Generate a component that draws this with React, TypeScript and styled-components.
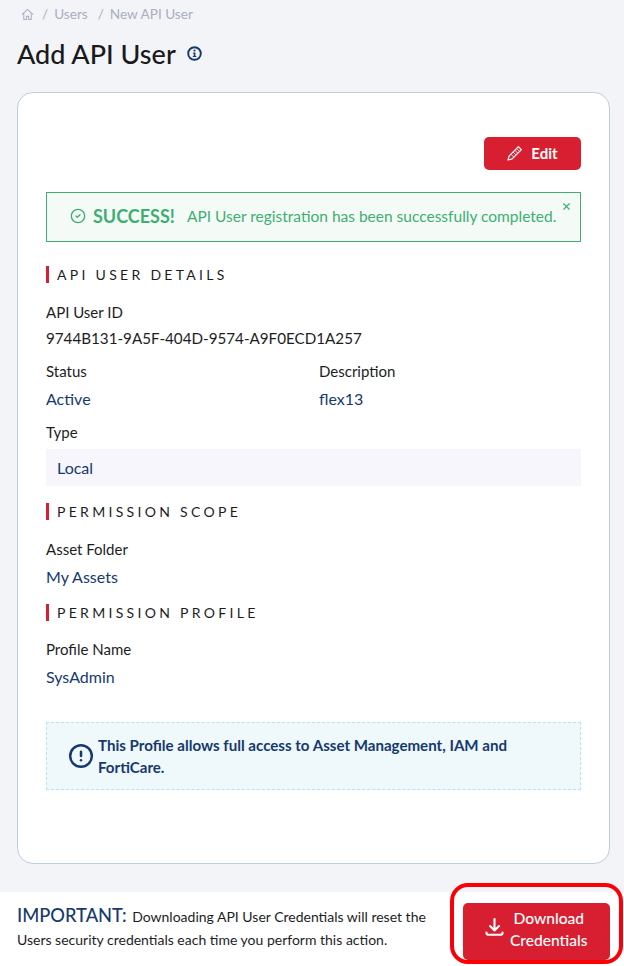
import React from "react";
import styled, { createGlobalStyle } from "styled-components";
import { CircleCheck, X, CircleAlert } from "lucide-react";

const GlobalStyle = createGlobalStyle`
  html, body {
    margin: 0;
    padding: 0;
    background: #f2f4f7;
  }
  body {
    font-family: Lato, "Liberation Sans", sans-serif;
    color: #1d1d1f;
  }
`;

const Page = styled.div`
  width: 624px;
  height: 966px;
  display: flex;
  flex-direction: column;
  overflow: hidden;
`;

const Top = styled.div`
  flex: 1;
  padding: 5px 14px 0 17px;
`;

const Breadcrumb = styled.div`
  display: flex;
  align-items: center;
  height: 18px;
  padding-left: 4px;
  font-size: 13.6px;
  color: #a9afc0;
`;

const Crumb = styled.span<{ $gap: number }>`
  margin-left: ${(p) => p.$gap}px;
`;

const TitleRow = styled.div`
  display: flex;
  align-items: center;
  margin-top: 13px;
  height: 34px;
  color: #16396f;
`;

const Title = styled.h1`
  margin: 0 11px 0 0;
  font-size: 27px;
  font-weight: 500;
  color: #1a1a1c;
`;

const Card = styled.div`
  margin-top: 22px;
  height: 772px;
  box-sizing: border-box;
  background: #fff;
  border: 1px solid #bccde4;
  border-radius: 16px;
  padding: 44px 28px 0;
`;

const EditRow = styled.div`
  display: flex;
  justify-content: flex-end;
`;

const RedButton = styled.button`
  display: flex;
  align-items: center;
  justify-content: center;
  border: none;
  padding: 0;
  border-radius: 5px;
  background: #d81f32;
  color: #fff;
  font-family: inherit;
  font-weight: 500;
`;

const EditButton = styled(RedButton)`
  width: 97px;
  height: 33px;
  padding-bottom: 1px;
  gap: 8px;
  font-size: 15px;
  font-weight: 700;
`;

const Alert = styled.div`
  position: relative;
  margin-top: 22px;
  height: 50px;
  box-sizing: border-box;
  display: flex;
  align-items: center;
  padding: 0 0 2px 23px;
  background: #f4fbf6;
  border: 1px solid #3fae72;
  color: #3fae72;
  font-size: 15.5px;
`;

const AlertStrong = styled.strong`
  font-size: 18px;
  font-weight: 700;
  margin: 0 12px 0 7px;
`;

const Close = styled.div`
  position: absolute;
  top: 8px;
  right: 8px;
  display: flex;
`;

const Section = styled.h2<{ $top?: number }>`
  margin: ${(p) => p.$top ?? 17}px 0 0;
  height: 17px;
  line-height: 17px;
  padding-left: 8px;
  border-left: 3px solid #d81f32;
  font-size: 14px;
  font-weight: 400;
  letter-spacing: 3.3px;
  color: #1d1d1f;
`;

const Label = styled.div`
  font-size: 15px;
  line-height: 20px;
  color: #1d1d1f;
`;

const Value = styled.div<{ $dark?: boolean }>`
  margin-top: ${(p) => (p.$dark ? 6 : 8)}px;
  font-size: ${(p) => (p.$dark ? "15.2px" : "16px")};
  line-height: 20px;
  color: ${(p) => (p.$dark ? "#1d1d1f" : "#16396f")};
`;

const Field = styled.div<{ $top: number }>`
  margin-top: ${(p) => p.$top}px;
`;

const TwoCols = styled.div`
  display: grid;
  grid-template-columns: 273px 1fr;
  margin-top: 13px;
`;

const LocalBox = styled.div`
  margin-top: 7px;
  height: 37px;
  display: flex;
  align-items: center;
  padding-left: 11px;
  background: #f6f6fc;
  font-size: 16px;
  color: #16396f;
`;

const Note = styled.div`
  margin-top: 35px;
  height: 68px;
  box-sizing: border-box;
  display: flex;
  align-items: center;
  gap: 4px;
  padding: 0 60px 0 21px;
  background: #eff8fa;
  border: 1px dashed #b5e3f0;
  color: #16396f;
  font-size: 15.1px;
  font-weight: 700;
  line-height: 22px;
`;

const Footer = styled.div`
  height: 74px;
  box-sizing: border-box;
  display: flex;
  align-items: flex-start;
  justify-content: space-between;
  padding: 11px 14px 0 17px;
  background: #fff;
`;

const FooterText = styled.div`
  width: 420px;
  padding-top: 1px;
  font-size: 14px;
  line-height: 23px;
  color: #1d1d1f;
`;

const Important = styled.span`
  margin-right: 2px;
  font-size: 18.3px;
  font-weight: 500;
  color: #16396f;
`;

const DownloadWrap = styled.div`
  position: relative;
`;

const DownloadButton = styled(RedButton)`
  width: 147px;
  height: 57px;
  gap: 4.5px;
  padding-bottom: 5px;
  font-size: 15.6px;
  line-height: 22px;
`;

const DownloadSvg = styled.svg`
  margin-bottom: 4px;
`;

const Highlight = styled.div`
  position: absolute;
  top: -20px;
  left: -13px;
  right: -13px;
  bottom: -4px;
  border: 4px solid #fb0007;
  border-radius: 18px;
  pointer-events: none;
`;

const HomeIcon = () => (
  <svg width="13" height="13" viewBox="0 0 14 14" fill="none" stroke="currentColor" strokeWidth="1.1" strokeLinejoin="round">
    <path d="M1 7.2 7 1.6l6 5.6" />
    <path d="M3 5.6v6.9h2.8V9h2.4v3.5H11V5.6" />
  </svg>
);

const InfoIcon = () => (
  <svg width="15" height="15" viewBox="0 0 15 15">
    <circle cx="7.5" cy="7.5" r="6.3" fill="none" stroke="currentColor" strokeWidth="1.9" />
    <circle cx="7.5" cy="4.5" r="1.1" fill="currentColor" />
    <path d="M5.9 6.4h2.5v3.6h.9v1.1H5.8V10h.9V7.5h-.8z" fill="currentColor" />
  </svg>
);

const PencilIcon = () => (
  <svg width="16" height="16" viewBox="0 0 16 16" fill="none" stroke="currentColor" strokeWidth="1.2" strokeLinejoin="round">
    <path d="M11.4 1.6l3 3L5.2 13.8 1 15l1.2-4.2z" />
    <path d="M9.6 3.4l3 3M3.9 9.2l2.9 2.9M6 7l2.9 2.9M7.8 5.2l2.9 2.9" strokeWidth="0.9" />
  </svg>
);

const DownloadIcon = () => (
  <DownloadSvg width="20" height="20" viewBox="0 0 20 20" fill="none" stroke="currentColor" strokeWidth="2.1" strokeLinecap="round" strokeLinejoin="round">
    <path d="M9.5 2v11.5M5 9l4.5 4.5L14 9" />
    <path d="M1.5 15.5v.6c0 1 .7 1.6 1.6 1.6h12.8c.9 0 1.6-.6 1.6-1.6v-.6" />
  </DownloadSvg>
);

export default function App() {
  return (
    <Page>
      <GlobalStyle />
      <Top>
        <Breadcrumb>
          <HomeIcon />
          <Crumb $gap={8}>/</Crumb>
          <Crumb $gap={6}>Users</Crumb>
          <Crumb $gap={10}>/</Crumb>
          <Crumb $gap={6}>New API User</Crumb>
        </Breadcrumb>
        <TitleRow>
          <Title>Add API User</Title>
          <InfoIcon />
        </TitleRow>
        <Card>
          <EditRow>
            <EditButton>
              <PencilIcon />
              Edit
            </EditButton>
          </EditRow>
          <Alert>
            <CircleCheck size={16} strokeWidth={2} />
            <AlertStrong>SUCCESS!</AlertStrong>
            API User registration has been successfully completed.
            <Close>
              <X size={11} strokeWidth={2.5} />
            </Close>
          </Alert>
          <Section $top={24}>API USER DETAILS</Section>
          <Field $top={19}>
            <Label>API User ID</Label>
            <Value $dark>9744B131-9A5F-404D-9574-A9F0ECD1A257</Value>
          </Field>
          <TwoCols>
            <div>
              <Label>Status</Label>
              <Value>Active</Value>
            </div>
            <div>
              <Label>Description</Label>
              <Value>flex13</Value>
            </div>
          </TwoCols>
          <Field $top={13}>
            <Label>Type</Label>
            <LocalBox>Local</LocalBox>
          </Field>
          <Section>PERMISSION SCOPE</Section>
          <Field $top={19}>
            <Label>Asset Folder</Label>
            <Value>My Assets</Value>
          </Field>
          <Section>PERMISSION PROFILE</Section>
          <Field $top={18}>
            <Label>Profile Name</Label>
            <Value>SysAdmin</Value>
          </Field>
          <Note>
            <CircleAlert size={26} strokeWidth={2.3} style={{ flexShrink: 0 }} />
            <div>This Profile allows full access to Asset Management, IAM and FortiCare.</div>
          </Note>
        </Card>
      </Top>
      <Footer>
        <FooterText>
          <Important>IMPORTANT:</Important> Downloading API User Credentials will reset the Users security credentials each time you perform this action.
        </FooterText>
        <DownloadWrap>
          <DownloadButton>
            <DownloadIcon />
            <span>
              Download
              <br />
              Credentials
            </span>
          </DownloadButton>
          <Highlight />
        </DownloadWrap>
      </Footer>
    </Page>
  );
}
